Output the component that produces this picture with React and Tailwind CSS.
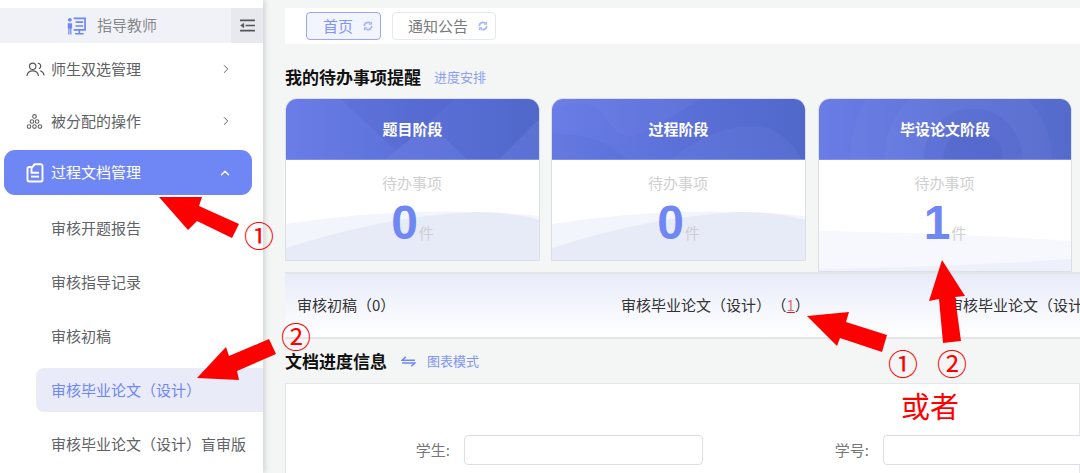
import React from "react";
import { ChevronRight, ChevronUp } from "lucide-react";

function Refresh({ className }) {
  return (
    <svg viewBox="0 0 12 12" className={className} fill="none" stroke="currentColor" strokeWidth="2">
      <path d="M1.6 6a4.4 4.4 0 0 1 7.6-3" />
      <path d="M10.4 6a4.4 4.4 0 0 1-7.6 3" />
      <path d="M10.2 .8v3H7.2" strokeWidth="1.4" />
      <path d="M1.8 11.2v-3h3" strokeWidth="1.4" />
    </svg>
  );
}

function Logo() {
  return (
    <svg viewBox="0 0 20 20" className="w-[19px] h-[19px]" fill="none">
      <circle cx="3" cy="4" r="2" fill="#6f86f5" />
      <path d="M.8 7.5h4.6v5.5h-.7V19.5H3.4v-6h-.8v6H1.3V13H.8z" fill="#6f86f5" />
      <path d="M7 2.5h12v12H7" stroke="#6f86f5" strokeWidth="1.8" />
      <path d="M9 6.5h8M9 10.5h8M13 14.5V18M8.5 18.7h9" stroke="#6f86f5" strokeWidth="1.7" />
    </svg>
  );
}

function UsersIcon() {
  return (
    <svg viewBox="0 0 20 16" className="w-[19px] h-[15px]" fill="none" stroke="#555" strokeWidth="1.2">
      <circle cx="7" cy="4.6" r="3.4" />
      <path d="M.8 15c.4-3.6 3-5.6 6.2-5.6s5.8 2 6.2 5.6" />
      <path d="M12.4 1.4a3 3 0 0 1 1.2 5.8" />
      <path d="M15 9.4c2.2.6 3.8 2.4 4.2 4.8" />
    </svg>
  );
}

function TreeIcon() {
  return (
    <svg viewBox="0 0 18 18" className="w-[17px] h-[17px]" fill="none" stroke="#666" strokeWidth="1.2">
      <circle cx="9" cy="3.6" r="1.9" />
      <circle cx="6.3" cy="9" r="1.9" />
      <circle cx="11.7" cy="9" r="1.9" />
      <circle cx="3.2" cy="14.4" r="1.9" />
      <circle cx="9" cy="14.4" r="1.9" />
      <circle cx="14.8" cy="14.4" r="1.9" />
    </svg>
  );
}

function DocIcon() {
  return (
    <svg viewBox="0 0 18 20" className="w-[18px] h-[20px]" fill="none" stroke="#fff" strokeWidth="1.9">
      <path d="M5.5 4H3.2A1.7 1.7 0 0 0 1.5 5.7v11.1a1.7 1.7 0 0 0 1.7 1.7h11.6a1.7 1.7 0 0 0 1.7-1.7V3a1.7 1.7 0 0 0-1.7-1.7H8.6L5.5 5.2v4.6h7.5" />
      <path d="M5 13.6h8" />
    </svg>
  );
}

function SideItem({ icon, label, chevron }) {
  return (
    <div className="h-[52px] pl-[26px] pr-[30px] flex items-center text-[#606266]">
      <span className="w-[25px] flex-none flex items-center">{icon}</span>
      <span className="flex-1 text-[15px]">{label}</span>
      {chevron}
    </div>
  );
}

function SubItem({ label, active }) {
  return (
    <div
      className={
        active
          ? "ml-[36px] my-[5px] h-[44px] pl-[15px] flex items-center text-[15px] text-[#6f86f5] bg-[#e9ecf8] rounded-l-[8px]"
          : "ml-[36px] h-[54px] pl-[15px] flex items-center text-[15px] text-[#606266]"
      }
    >
      {label}
    </div>
  );
}

function Wave({ variant }) {
  return (
    <svg viewBox="0 0 255 60" preserveAspectRatio="none" className="absolute left-0 bottom-0 w-full h-[60px] pointer-events-none">
      {variant === "b" ? (
        <>
          <path d="M0 20 Q130 22 255 30 V60 H0z" fill="#f6f8fd" />
          <path d="M0 58 Q130 56 255 48 V60 H0z" fill="#eef1fb" />
        </>
      ) : (
        <>
          <path d="M0 24 Q130 4 255 16 V60 H0z" fill="#f3f5fc" />
          <path d="M0 48 Q100 16 190 12 Q230 12 255 20 V60 H0z" fill="#e7ebf8" />
        </>
      )}
    </svg>
  );
}

function Card({ title, count, width, height, variant, deco }) {
  return (
    <div className={`${width} ${height} flex-none relative bg-white border border-[#dcdfe3] rounded-t-[12px] overflow-hidden`}>
      <div className="relative h-[61px] bg-gradient-to-r from-[#6a7de6] via-[#5b70d8] to-[#5068ca] border-b border-[#7f90e6] flex items-center justify-center overflow-hidden">
        {deco}
        <span className="relative text-white text-[15px] font-bold">{title}</span>
      </div>
      <Wave variant={variant} />
      <div className="relative flex flex-col items-center pt-[13px]">
        <div className="text-[15px] leading-[20px] text-[#cfcfcf] -ml-[1px]">待办事项</div>
        <div className="flex items-end h-[50px] mt-[5px]">
          <span className="text-[48px] leading-[50px] font-bold text-[#6f86f5] font-['Liberation_Sans',sans-serif]">{count}</span>
          <span className="text-[15px] leading-[20px] text-[#cfcfcf] pb-[5px] pl-[1px]">件</span>
        </div>
      </div>
    </div>
  );
}

const decoA = (
  <svg viewBox="0 0 255 61" preserveAspectRatio="none" className="absolute inset-0 w-full h-full">
    <path d="M55 0 L112 53 L170 0z" fill="#3f55b8" opacity="0.12" />
    <path d="M100 61 L145 25 L182 61z" fill="#8191ee" opacity="0.2" />
    <path d="M215 61 L255 20 V61z" fill="#7d8fec" opacity="0.25" />
  </svg>
);
const decoB = (
  <svg viewBox="0 0 255 61" preserveAspectRatio="none" className="absolute inset-0 w-full h-full">
    <path d="M0 10 Q40 -5 55 20 T90 35 T150 0 H0z" fill="#7d8fec" opacity="0.15" />
    <path d="M0 35 Q50 35 75 61 H0z" fill="#3f55b8" opacity="0.1" />
    <path d="M120 61 Q170 20 220 30 Q240 40 252 61z" fill="#8191ee" opacity="0.15" />
  </svg>
);
const decoC = (
  <svg viewBox="0 0 253 61" className="absolute inset-0 w-full h-full" fill="none">
    <circle cx="150" cy="60" r="120" fill="#fff" opacity="0.025" />
    <circle cx="150" cy="60" r="85" fill="#fff" opacity="0.03" />
    <circle cx="155" cy="60" r="50" fill="#3f55b8" opacity="0.14" />
    <circle cx="155" cy="60" r="30" fill="#3f55b8" opacity="0.18" />
  </svg>
);

function Field({ label, labelW, inputW }) {
  return (
    <div className="flex items-center h-[30px]">
      <span className={`${labelW} text-right text-[15px] text-[#777] pr-[14px]`}>{label}</span>
      <div className={`${inputW} h-[30px] bg-white border border-[#dcdfe6] rounded-[4px] flex-none`} />
    </div>
  );
}

export default function App() {
  return (
    <div className="relative w-[1080px] h-[473px] overflow-hidden flex bg-[#f4f6f6] font-['Noto_Sans_CJK_SC','Liberation_Sans',sans-serif]">
      <aside className="w-[263px] flex-none bg-white pt-[8px] shadow-[2px_0_5px_rgba(0,0,0,0.14)] relative z-10">
        <div className="h-[35px] bg-[#f0f2f8] flex items-center">
          <div className="flex-1 flex items-center justify-center pr-[7px]">
            <Logo />
            <span className="ml-[11px] text-[15px] text-[#888]">指导教师</span>
          </div>
          <div className="w-[32px] h-[35px] bg-[#e7e9ef] flex items-center justify-center">
            <svg viewBox="0 0 18 14" className="w-[17px] h-[13px]" fill="none" stroke="#555" strokeWidth="1.7">
              <path d="M1 1.5h16M7 7h10M1 12.5h16" />
              <path d="M5 4.6 1.6 7 5 9.4z" fill="#555" strokeWidth="0.6" />
            </svg>
          </div>
        </div>
        <SideItem
          icon={<UsersIcon />}
          label="师生双选管理"
          chevron={<ChevronRight size={14} strokeWidth={1.7} color="#666" />}
        />
        <SideItem
          icon={<TreeIcon />}
          label="被分配的操作"
          chevron={<ChevronRight size={14} strokeWidth={1.7} color="#666" />}
        />
        <div className="ml-[4px] mr-[11px] mt-[3px] h-[45px] pl-[22px] pr-[20px] flex items-center rounded-[11px] bg-[#6f86f5] text-white">
          <span className="w-[25px] flex-none flex items-center"><DocIcon /></span>
          <span className="flex-1 text-[15px]">过程文档管理</span>
          <ChevronUp size={14} strokeWidth={2.4} color="#fff" />
        </div>
        <div className="pt-[6px]">
          <SubItem label="审核开题报告" />
          <SubItem label="审核指导记录" />
          <SubItem label="审核初稿" />
          <SubItem label="审核毕业论文（设计）" active />
          <SubItem label="审核毕业论文（设计）盲审版" />
        </div>
      </aside>

      <main className="flex-1 min-w-0 pt-[8px] pl-[22px]">
        <div className="h-[36px] bg-white flex items-center pl-[21px] gap-[11px]">
          <div className="w-[75px] h-[28px] flex items-center justify-center gap-[10px] pl-[9px] rounded-[4px] border border-[#9aa9f7] bg-[#f2f4ff] text-[15px] text-[#8094f5]">
            <span>首页</span>
            <Refresh className="w-[10px] h-[10px] text-[#a9b6f5]" />
          </div>
          <div className="w-[104px] h-[28px] flex items-center justify-center gap-[10px] pl-[8px] rounded-[4px] border border-[#e6e8ed] bg-white text-[15px] text-[#7a7a7a]">
            <span>通知公告</span>
            <Refresh className="w-[10px] h-[10px] text-[#a9b6f5]" />
          </div>
        </div>

        <div className="h-[54px] flex items-center pt-[12px]">
          <h2 className="text-[17px] font-bold text-[#111]">我的待办事项提醒</h2>
          <span className="ml-[13px] text-[13px] text-[#8c9ff7]">进度安排</span>
        </div>

        <div className="flex items-start gap-[11px] h-[174px]">
          <Card title="题目阶段" count="0" width="w-[255px]" height="h-[163px]" variant="a" deco={decoA} />
          <Card title="过程阶段" count="0" width="w-[255px]" height="h-[163px]" variant="a" deco={decoB} />
          <div className="ml-[1px]">
            <Card title="毕设论文阶段" count="1" width="w-[254px]" height="h-[174px]" variant="b" deco={decoC} />
          </div>
        </div>

        <div className="h-[67px] border-y-2 border-[#e3e5e8] bg-gradient-to-b from-[#e8ecf9] to-white flex items-center pl-[12px] text-[15px] text-[#333] whitespace-nowrap overflow-hidden">
          <span className="w-[324px] flex-none">审核初稿（0）</span>
          <span className="w-[327px] flex-none">
            审核毕业论文（设计）<span className="ml-[8px]">（<span className="text-[#e57373] underline decoration-[#c62828]">1</span>）</span>
          </span>
          <span>审核毕业论文（设计）</span>
        </div>

        <div className="h-[44px] flex items-center">
          <h2 className="text-[17px] font-bold text-[#111]">文档进度信息</h2>
          <svg viewBox="0 0 16 12" className="ml-[14px] w-[15px] h-[11px]" fill="none" stroke="#6f86f5" strokeWidth="1.6">
            <path d="M5 1 1 4.6h14M1 7.6h14l-4 3.6" />
          </svg>
          <span className="ml-[11px] text-[13px] text-[#8094f5]">图表模式</span>
        </div>

        <div className="h-[100px] bg-white border border-[#e4e6e8] pt-[51px] flex items-start">
          <Field label="学生:" labelW="w-[178px]" inputW="w-[239px]" />
          <Field label="学号:" labelW="w-[180px]" inputW="w-[239px]" />
        </div>
      </main>

      <svg viewBox="0 0 1080 473" className="absolute inset-0 w-[1080px] h-[473px] z-20 pointer-events-none" fill="#ff0000">
        <polygon points="159,197 202,197 199,206 239,224 232,238 197,221 188,230" />
        <polygon points="197,378 226,347 229,356 269,339 276,354 237,371 239,380" />
        <polygon points="807,316 849,312 846,322 887,335 882,352 840,338 837,346" />
        <polygon points="942,260 965,296 955,297 961,341 943,343 939,299 929,301" />
      </svg>
      <span className="absolute z-20 left-[243px] top-[216px] w-[32px] text-center text-[30px] leading-[36px] text-[#ff0000]">①</span>
      <span className="absolute z-20 left-[280px] top-[317px] w-[32px] text-center text-[30px] leading-[36px] text-[#ff0000]">②</span>
      <span className="absolute z-20 left-[887px] top-[344px] w-[32px] text-center text-[30px] leading-[36px] text-[#ff0000]">①</span>
      <span className="absolute z-20 left-[936px] top-[344px] w-[32px] text-center text-[30px] leading-[36px] text-[#ff0000]">②</span>
      <span className="absolute z-20 left-[901px] top-[384px] text-[29px] leading-[42px] text-[#ff0000]">或者</span>
    </div>
  );
}
